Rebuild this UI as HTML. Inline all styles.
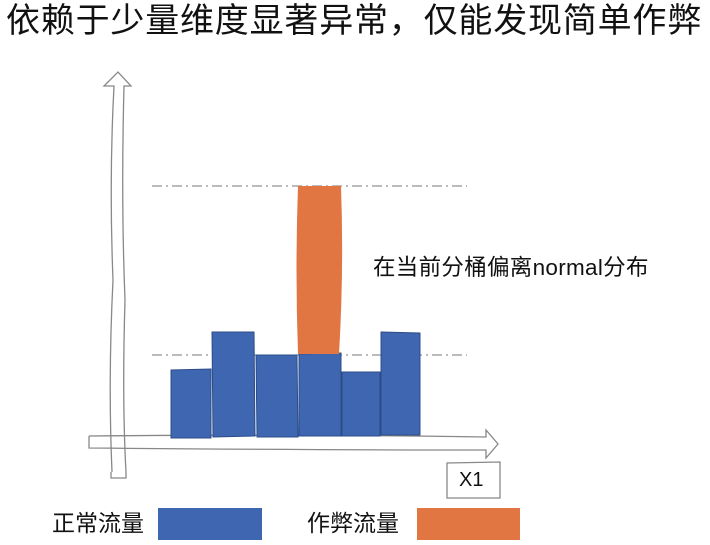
<!DOCTYPE html>
<html><head><meta charset="utf-8"><style>
html,body{margin:0;padding:0;background:#fff;}
body{width:710px;height:545px;position:relative;overflow:hidden;font-family:"Liberation Sans","Noto Sans CJK SC",sans-serif;color:#111;}
.t{position:absolute;white-space:nowrap;line-height:1;}
</style></head><body>
<div class="t" style="left:6px;top:4px;font-size:34px;letter-spacing:0.8px;">依赖于少量维度显著异常，仅能发现简单作弊</div>
<svg width="710" height="545" style="position:absolute;left:0;top:0">
<g fill="none" stroke="#888" stroke-width="1.3">
<path d="M112 472 Q108 380 113 280 Q109 180 114 86 L104 86 L118 72 L131 86 L124 86 Q121 200 125 300 Q122 400 126 472"/>
<path d="M111 472 L111 478 L126 478 L126 472"/>
<path d="M89 436 L89 448 Q300 450 486 450 L486 458 L498 444 L486 430 L486 437 Q300 434 89 436"/>
<path d="M447 463 L500 462 L500 498 L447 498 Z"/>
</g>
<g stroke="#777" stroke-width="1" stroke-dasharray="10,4,2,4">
<line x1="152" y1="186" x2="467" y2="186"/>
<line x1="152" y1="355" x2="467" y2="355"/>
</g>
<g fill="#3e66b1" stroke="#2c4c88" stroke-width="1">
<path d="M171 370 L211 369 L211 438 L171 438 Z"/>
<path d="M212 332 L254 332 L255 436 L213 437 Z"/>
<path d="M256 355 L297 355 L298 437 L257 437 Z"/>
<path d="M299 354 L341 353 L341 436 L299 436 Z"/>
<path d="M342 372 L380 372 L380 436 L342 436 Z"/>
<path d="M381 332 L420 333 L420 435 L381 435 Z"/>
</g>
<path d="M298 186 L341 186 Q344 270 339 354 L298 354 Q295 270 298 186 Z" fill="#e27642"/>
<rect x="158" y="508" width="104" height="32" fill="#3e66b1"/>
<rect x="417" y="508" width="103" height="32" fill="#e27642"/>
</svg>
<div class="t" style="left:373px;top:257px;font-size:22.5px;letter-spacing:0.3px;">在当前分桶偏离normal分布</div>
<div class="t" style="left:459px;top:470px;font-size:20px;">X1</div>
<div class="t" style="left:52px;top:512px;font-size:23px;">正常流量</div>
<div class="t" style="left:307px;top:512px;font-size:23px;">作弊流量</div>
</body></html>
